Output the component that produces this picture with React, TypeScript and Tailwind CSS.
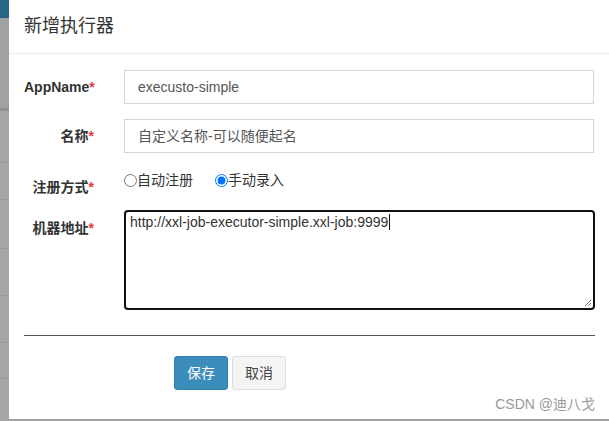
import React from "react";

const font = "font-['Liberation_Sans','Noto_Sans_CJK_SC',sans-serif]";

const Label = ({ text, className = "" }: { text: string; className?: string }) => (
  <div className={`w-[70px] shrink-0 whitespace-nowrap text-right text-[14px] font-bold text-[#333] ${className}`}>
    {text}
    <span className="text-[#e33]">*</span>
  </div>
);

const SideStrip = () => (
  <div className="flex w-[9px] shrink-0 flex-col bg-[#a6a6a6]">
    <div className="h-[18px] bg-[#2a6587]" />
    <div className="h-[90px] bg-[#9ea2a5]" />
    <div className="h-[3px] bg-[#8e9194]" />
    <div className="h-[51px]" />
    <div className="h-px bg-[#9c9c9c]" />
    <div className="h-[36px]" />
    <div className="h-px bg-[#9c9c9c]" />
    <div className="h-[48px]" />
    <div className="h-px bg-[#9c9c9c]" />
    <div className="h-[46px]" />
    <div className="h-px bg-[#9c9c9c]" />
    <div className="h-[46px]" />
    <div className="h-px bg-[#9c9c9c]" />
    <div className="h-[35px]" />
    <div className="h-px bg-[#9c9c9c]" />
  </div>
);

const App = () => {
  return (
    <div className={`flex h-[421px] w-[609px] overflow-hidden bg-white ${font}`}>
      <SideStrip />
      <div className="flex flex-1 flex-col border-b-2 border-[#a3a3a3] bg-white">
        <div className="flex h-[54px] items-center border-b border-[#ececec] px-[15px]">
          <h4 className="text-[18px] text-[#333]">新增执行器</h4>
        </div>

        <div className="flex flex-col px-[15px] pt-[16px]">
          <div className="flex items-center">
            <Label text="AppName" />
            <div className="ml-[30px] flex h-[34px] w-[470px] items-center border border-[#d2d6de] px-[13px] text-[14px] text-[#555]">
              execusto-simple
            </div>
          </div>

          <div className="mt-[15px] flex items-center">
            <Label text="名称" />
            <div className="ml-[30px] flex h-[34px] w-[470px] items-center border border-[#d2d6de] px-[13px] text-[14px] text-[#555]">
              自定义名称-可以随便起名
            </div>
          </div>

          <div className="mt-[17px] flex items-start">
            <Label text="注册方式" className="pt-[7px]" />
            <div className="ml-[30px] flex items-center text-[14px] text-[#333]">
              <label className="flex items-center">
                <input type="radio" name="addressType" className="m-0 h-[13px] w-[13px]" />
                <span>自动注册</span>
              </label>
              <label className="ml-[22px] flex items-center">
                <input type="radio" name="addressType" defaultChecked className="m-0 h-[13px] w-[13px]" />
                <span>手动录入</span>
              </label>
            </div>
          </div>

          <div className="mt-[12px] flex items-start">
            <Label text="机器地址" className="pt-[8px]" />
            <div className="relative ml-[30px] h-[100px] w-[471px] rounded-[4px] border-2 border-[#111] px-[4px] pt-0 text-[14px] text-[#333]">
              <span>http://xxl-job-executor-simple.xxl-job:9999</span>
              <span className="ml-px inline-block h-[16px] w-px bg-[#111] align-[-3px]" />
              <svg className="absolute bottom-[1px] right-[1px]" width="9" height="9" viewBox="0 0 9 9">
                <path d="M8 2 L2 8 M8 5 L5 8" stroke="#777" strokeWidth="1" fill="none" />
              </svg>
            </div>
          </div>
        </div>

        <div className="mx-[15px] mt-[25px] h-px bg-[#555]" />

        <div className="flex pl-[165px] pt-[20px]">
          <button className="h-[34px] w-[54px] rounded-[3px] border border-[#367fa9] bg-[#3c8dbc] text-[14px] text-white">
            保存
          </button>
          <button className="ml-[4px] h-[34px] w-[54px] rounded-[3px] border border-[#ddd] bg-[#f4f4f4] text-[14px] text-[#444]">
            取消
          </button>
        </div>

        <div className="mt-auto flex justify-end pb-[4px] pr-[15px] text-[14px] text-[#999]">
          CSDN @迪八戈
        </div>
      </div>
    </div>
  );
};

export default App;
